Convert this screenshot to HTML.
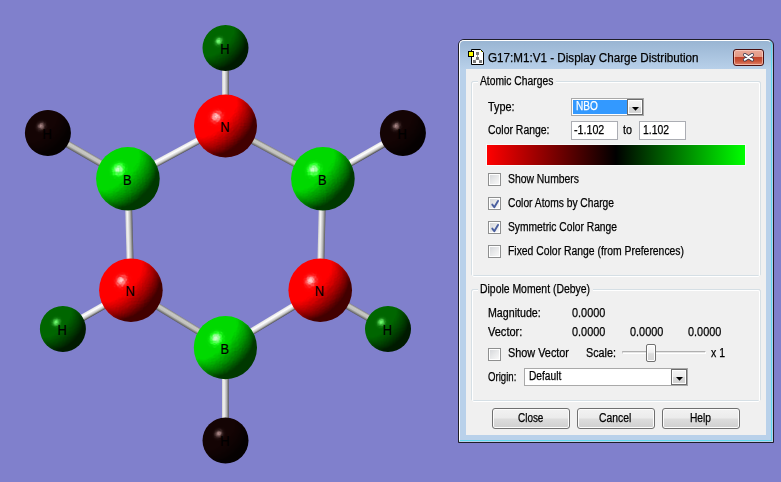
<!DOCTYPE html>
<html><head><meta charset="utf-8"><style>
html,body{margin:0;padding:0;width:781px;height:482px;overflow:hidden;background:#8080cc;}
body{position:relative;font-family:"Liberation Sans",sans-serif;}
.t{position:absolute;white-space:nowrap;transform-origin:0 0;-webkit-text-stroke:0.25px currentColor;}
.a{position:absolute;box-sizing:border-box;}
.cb{position:absolute;width:13px;height:13px;box-sizing:border-box;border:1px solid #8e8f8f;background:#fff;}
.cbi{position:absolute;left:1px;top:1px;width:9px;height:9px;background:linear-gradient(135deg,#d6d8db 0%,#e8e9ea 50%,#f8f8f8 100%);border:0;}
.btn{position:absolute;border:1px solid #707070;border-radius:3px;background:linear-gradient(#f2f2f2 0%,#ebebeb 48%,#dddddd 52%,#cfcfcf 100%);box-shadow:inset 0 0 0 1px #fcfcfc;}
</style></head><body>
<svg width="781" height="482" style="position:absolute;left:0;top:0"><defs>
<radialGradient id="hgr" cx="0.5" cy="0.5" r="0.5"><stop offset="0.0000" stop-color="rgb(255,255,255)"/><stop offset="0.0312" stop-color="rgb(255,255,255)"/><stop offset="0.0625" stop-color="rgb(255,255,255)"/><stop offset="0.0938" stop-color="rgb(254,254,254)"/><stop offset="0.1250" stop-color="rgb(253,253,253)"/><stop offset="0.1562" stop-color="rgb(252,252,252)"/><stop offset="0.1875" stop-color="rgb(250,250,250)"/><stop offset="0.2188" stop-color="rgb(249,249,249)"/><stop offset="0.2500" stop-color="rgb(247,247,247)"/><stop offset="0.2812" stop-color="rgb(245,245,245)"/><stop offset="0.3125" stop-color="rgb(242,242,242)"/><stop offset="0.3438" stop-color="rgb(239,239,239)"/><stop offset="0.3750" stop-color="rgb(236,236,236)"/><stop offset="0.4062" stop-color="rgb(233,233,233)"/><stop offset="0.4375" stop-color="rgb(229,229,229)"/><stop offset="0.4688" stop-color="rgb(225,225,225)"/><stop offset="0.5000" stop-color="rgb(221,221,221)"/><stop offset="0.5312" stop-color="rgb(216,216,216)"/><stop offset="0.5625" stop-color="rgb(211,211,211)"/><stop offset="0.5938" stop-color="rgb(205,205,205)"/><stop offset="0.6250" stop-color="rgb(199,199,199)"/><stop offset="0.6562" stop-color="rgb(192,192,192)"/><stop offset="0.6875" stop-color="rgb(185,185,185)"/><stop offset="0.7188" stop-color="rgb(177,177,177)"/><stop offset="0.7500" stop-color="rgb(169,169,169)"/><stop offset="0.7812" stop-color="rgb(159,159,159)"/><stop offset="0.8125" stop-color="rgb(149,149,149)"/><stop offset="0.8438" stop-color="rgb(137,137,137)"/><stop offset="0.8750" stop-color="rgb(123,123,123)"/><stop offset="0.9062" stop-color="rgb(108,108,108)"/><stop offset="0.9375" stop-color="rgb(89,89,89)"/><stop offset="0.9688" stop-color="rgb(63,63,63)"/><stop offset="1.0000" stop-color="rgb(0,0,0)"/></radialGradient>
<filter id="fn" x="-10%" y="-10%" width="120%" height="120%" color-interpolation-filters="sRGB">
<feColorMatrix in="SourceGraphic" type="matrix" values="0 0 0 0 0  0 0 0 0 0  0 0 0 0 0  1 0 0 0 0" result="h0"/>
<feGaussianBlur in="h0" stdDeviation="1.5" result="h"/>
<feDiffuseLighting in="h" surfaceScale="15.85" diffuseConstant="0.9" lighting-color="#fff" result="d1"><feDistantLight azimuth="225" elevation="25"/></feDiffuseLighting>
<feDiffuseLighting in="h" surfaceScale="15.85" diffuseConstant="0.9" lighting-color="#fff" result="d2"><feDistantLight azimuth="45" elevation="-25"/></feDiffuseLighting>
<feComponentTransfer in="d2" result="d2i"><feFuncR type="linear" slope="-1" intercept="1"/><feFuncG type="linear" slope="-1" intercept="1"/><feFuncB type="linear" slope="-1" intercept="1"/></feComponentTransfer>
<feComposite in="d1" in2="d2i" operator="arithmetic" k1="0" k2="1" k3="1" k4="-0.4400" result="I"/>
<feComponentTransfer in="I" result="If"><feFuncR type="table" tableValues="0.2600 0.2600 0.2600 0.2600 0.2600 0.2600 0.2600 0.2600 0.2600 0.2600 0.2600 0.2750 0.3000 0.3250 0.3500 0.3750 0.4000 0.4250 0.4500 0.4750 0.5000 0.5250 0.5500 0.5750 0.6000 0.6250 0.6500 0.6750 0.7000 0.7250 0.7500 0.7750 0.8000 0.8250 0.8500 0.8750 0.9000 0.9250 0.9500 0.9750 1.0000"/><feFuncG type="table" tableValues="0.2600 0.2600 0.2600 0.2600 0.2600 0.2600 0.2600 0.2600 0.2600 0.2600 0.2600 0.2750 0.3000 0.3250 0.3500 0.3750 0.4000 0.4250 0.4500 0.4750 0.5000 0.5250 0.5500 0.5750 0.6000 0.6250 0.6500 0.6750 0.7000 0.7250 0.7500 0.7750 0.8000 0.8250 0.8500 0.8750 0.9000 0.9250 0.9500 0.9750 1.0000"/><feFuncB type="table" tableValues="0.2600 0.2600 0.2600 0.2600 0.2600 0.2600 0.2600 0.2600 0.2600 0.2600 0.2600 0.2750 0.3000 0.3250 0.3500 0.3750 0.4000 0.4250 0.4500 0.4750 0.5000 0.5250 0.5500 0.5750 0.6000 0.6250 0.6500 0.6750 0.7000 0.7250 0.7500 0.7750 0.8000 0.8250 0.8500 0.8750 0.9000 0.9250 0.9500 0.9750 1.0000"/></feComponentTransfer>
<feColorMatrix in="If" type="matrix" values="1 0 0 0 0  0 0 0 0 0  0 0 0 0 0  0 0 0 0 1" result="c"/>
<feSpecularLighting in="h" surfaceScale="15.85" specularConstant="0.95" specularExponent="90" lighting-color="rgb(255,216,216)" result="s"><feDistantLight azimuth="225" elevation="39"/></feSpecularLighting>
<feComposite in="s" in2="c" operator="arithmetic" k1="0" k2="1" k3="1" k4="0" result="t"/>
<feComposite in="t" in2="SourceAlpha" operator="in"/>
</filter>
<filter id="fb" x="-10%" y="-10%" width="120%" height="120%" color-interpolation-filters="sRGB">
<feColorMatrix in="SourceGraphic" type="matrix" values="0 0 0 0 0  0 0 0 0 0  0 0 0 0 0  1 0 0 0 0" result="h0"/>
<feGaussianBlur in="h0" stdDeviation="1.5" result="h"/>
<feDiffuseLighting in="h" surfaceScale="15.85" diffuseConstant="0.9" lighting-color="#fff" result="d1"><feDistantLight azimuth="225" elevation="25"/></feDiffuseLighting>
<feDiffuseLighting in="h" surfaceScale="15.85" diffuseConstant="0.9" lighting-color="#fff" result="d2"><feDistantLight azimuth="45" elevation="-25"/></feDiffuseLighting>
<feComponentTransfer in="d2" result="d2i"><feFuncR type="linear" slope="-1" intercept="1"/><feFuncG type="linear" slope="-1" intercept="1"/><feFuncB type="linear" slope="-1" intercept="1"/></feComponentTransfer>
<feComposite in="d1" in2="d2i" operator="arithmetic" k1="0" k2="1" k3="1" k4="-0.4400" result="I"/>
<feComponentTransfer in="I" result="If"><feFuncR type="table" tableValues="0.2600 0.2600 0.2600 0.2600 0.2600 0.2600 0.2600 0.2600 0.2600 0.2600 0.2600 0.2750 0.3000 0.3250 0.3500 0.3750 0.4000 0.4250 0.4500 0.4750 0.5000 0.5250 0.5500 0.5750 0.6000 0.6250 0.6500 0.6750 0.7000 0.7250 0.7500 0.7750 0.8000 0.8250 0.8500 0.8750 0.9000 0.9250 0.9500 0.9750 1.0000"/><feFuncG type="table" tableValues="0.2600 0.2600 0.2600 0.2600 0.2600 0.2600 0.2600 0.2600 0.2600 0.2600 0.2600 0.2750 0.3000 0.3250 0.3500 0.3750 0.4000 0.4250 0.4500 0.4750 0.5000 0.5250 0.5500 0.5750 0.6000 0.6250 0.6500 0.6750 0.7000 0.7250 0.7500 0.7750 0.8000 0.8250 0.8500 0.8750 0.9000 0.9250 0.9500 0.9750 1.0000"/><feFuncB type="table" tableValues="0.2600 0.2600 0.2600 0.2600 0.2600 0.2600 0.2600 0.2600 0.2600 0.2600 0.2600 0.2750 0.3000 0.3250 0.3500 0.3750 0.4000 0.4250 0.4500 0.4750 0.5000 0.5250 0.5500 0.5750 0.6000 0.6250 0.6500 0.6750 0.7000 0.7250 0.7500 0.7750 0.8000 0.8250 0.8500 0.8750 0.9000 0.9250 0.9500 0.9750 1.0000"/></feComponentTransfer>
<feColorMatrix in="If" type="matrix" values="0 0 0 0 0  0 0.85 0 0 0  0 0 0 0 0  0 0 0 0 1" result="c"/>
<feSpecularLighting in="h" surfaceScale="15.85" specularConstant="0.95" specularExponent="90" lighting-color="rgb(216,255,216)" result="s"><feDistantLight azimuth="225" elevation="39"/></feSpecularLighting>
<feComposite in="s" in2="c" operator="arithmetic" k1="0" k2="1" k3="1" k4="0" result="t"/>
<feComposite in="t" in2="SourceAlpha" operator="in"/>
</filter>
<filter id="fhg" x="-10%" y="-10%" width="120%" height="120%" color-interpolation-filters="sRGB">
<feColorMatrix in="SourceGraphic" type="matrix" values="0 0 0 0 0  0 0 0 0 0  0 0 0 0 0  1 0 0 0 0" result="h0"/>
<feGaussianBlur in="h0" stdDeviation="1.5" result="h"/>
<feDiffuseLighting in="h" surfaceScale="11.50" diffuseConstant="0.9" lighting-color="#fff" result="d1"><feDistantLight azimuth="225" elevation="25"/></feDiffuseLighting>
<feDiffuseLighting in="h" surfaceScale="11.50" diffuseConstant="0.9" lighting-color="#fff" result="d2"><feDistantLight azimuth="45" elevation="-25"/></feDiffuseLighting>
<feComponentTransfer in="d2" result="d2i"><feFuncR type="linear" slope="-1" intercept="1"/><feFuncG type="linear" slope="-1" intercept="1"/><feFuncB type="linear" slope="-1" intercept="1"/></feComponentTransfer>
<feComposite in="d1" in2="d2i" operator="arithmetic" k1="0" k2="1" k3="1" k4="-0.4400" result="I"/>
<feComponentTransfer in="I" result="If"><feFuncR type="table" tableValues="0.2600 0.2600 0.2600 0.2600 0.2600 0.2600 0.2600 0.2600 0.2600 0.2600 0.2600 0.2750 0.3000 0.3250 0.3500 0.3750 0.4000 0.4250 0.4500 0.4750 0.5000 0.5250 0.5500 0.5750 0.6000 0.6250 0.6500 0.6750 0.7000 0.7250 0.7500 0.7750 0.8000 0.8250 0.8500 0.8750 0.9000 0.9250 0.9500 0.9750 1.0000"/><feFuncG type="table" tableValues="0.2600 0.2600 0.2600 0.2600 0.2600 0.2600 0.2600 0.2600 0.2600 0.2600 0.2600 0.2750 0.3000 0.3250 0.3500 0.3750 0.4000 0.4250 0.4500 0.4750 0.5000 0.5250 0.5500 0.5750 0.6000 0.6250 0.6500 0.6750 0.7000 0.7250 0.7500 0.7750 0.8000 0.8250 0.8500 0.8750 0.9000 0.9250 0.9500 0.9750 1.0000"/><feFuncB type="table" tableValues="0.2600 0.2600 0.2600 0.2600 0.2600 0.2600 0.2600 0.2600 0.2600 0.2600 0.2600 0.2750 0.3000 0.3250 0.3500 0.3750 0.4000 0.4250 0.4500 0.4750 0.5000 0.5250 0.5500 0.5750 0.6000 0.6250 0.6500 0.6750 0.7000 0.7250 0.7500 0.7750 0.8000 0.8250 0.8500 0.8750 0.9000 0.9250 0.9500 0.9750 1.0000"/></feComponentTransfer>
<feColorMatrix in="If" type="matrix" values="0 0 0 0 0  0 0.4 0 0 0  0 0 0 0 0  0 0 0 0 1" result="c"/>
<feSpecularLighting in="h" surfaceScale="11.50" specularConstant="0.6" specularExponent="90" lighting-color="rgb(191,255,191)" result="s"><feDistantLight azimuth="225" elevation="39"/></feSpecularLighting>
<feComposite in="s" in2="c" operator="arithmetic" k1="0" k2="1" k3="1" k4="0" result="t"/>
<feComposite in="t" in2="SourceAlpha" operator="in"/>
</filter>
<filter id="fhk" x="-10%" y="-10%" width="120%" height="120%" color-interpolation-filters="sRGB">
<feColorMatrix in="SourceGraphic" type="matrix" values="0 0 0 0 0  0 0 0 0 0  0 0 0 0 0  1 0 0 0 0" result="h0"/>
<feGaussianBlur in="h0" stdDeviation="1.5" result="h"/>
<feDiffuseLighting in="h" surfaceScale="11.50" diffuseConstant="0.9" lighting-color="#fff" result="d1"><feDistantLight azimuth="225" elevation="25"/></feDiffuseLighting>
<feDiffuseLighting in="h" surfaceScale="11.50" diffuseConstant="0.9" lighting-color="#fff" result="d2"><feDistantLight azimuth="45" elevation="-25"/></feDiffuseLighting>
<feComponentTransfer in="d2" result="d2i"><feFuncR type="linear" slope="-1" intercept="1"/><feFuncG type="linear" slope="-1" intercept="1"/><feFuncB type="linear" slope="-1" intercept="1"/></feComponentTransfer>
<feComposite in="d1" in2="d2i" operator="arithmetic" k1="0" k2="1" k3="1" k4="-0.4400" result="I"/>
<feComponentTransfer in="I" result="If"><feFuncR type="table" tableValues="0.2600 0.2600 0.2600 0.2600 0.2600 0.2600 0.2600 0.2600 0.2600 0.2600 0.2600 0.2750 0.3000 0.3250 0.3500 0.3750 0.4000 0.4250 0.4500 0.4750 0.5000 0.5250 0.5500 0.5750 0.6000 0.6250 0.6500 0.6750 0.7000 0.7250 0.7500 0.7750 0.8000 0.8250 0.8500 0.8750 0.9000 0.9250 0.9500 0.9750 1.0000"/><feFuncG type="table" tableValues="0.2600 0.2600 0.2600 0.2600 0.2600 0.2600 0.2600 0.2600 0.2600 0.2600 0.2600 0.2750 0.3000 0.3250 0.3500 0.3750 0.4000 0.4250 0.4500 0.4750 0.5000 0.5250 0.5500 0.5750 0.6000 0.6250 0.6500 0.6750 0.7000 0.7250 0.7500 0.7750 0.8000 0.8250 0.8500 0.8750 0.9000 0.9250 0.9500 0.9750 1.0000"/><feFuncB type="table" tableValues="0.2600 0.2600 0.2600 0.2600 0.2600 0.2600 0.2600 0.2600 0.2600 0.2600 0.2600 0.2750 0.3000 0.3250 0.3500 0.3750 0.4000 0.4250 0.4500 0.4750 0.5000 0.5250 0.5500 0.5750 0.6000 0.6250 0.6500 0.6750 0.7000 0.7250 0.7500 0.7750 0.8000 0.8250 0.8500 0.8750 0.9000 0.9250 0.9500 0.9750 1.0000"/></feComponentTransfer>
<feColorMatrix in="If" type="matrix" values="0.08 0 0 0 0  0 0.015 0 0 0  0 0 0.015 0 0  0 0 0 0 1" result="c"/>
<feSpecularLighting in="h" surfaceScale="11.50" specularConstant="0.6" specularExponent="90" lighting-color="rgb(255,224,224)" result="s"><feDistantLight azimuth="225" elevation="39"/></feSpecularLighting>
<feComposite in="s" in2="c" operator="arithmetic" k1="0" k2="1" k3="1" k4="0" result="t"/>
<feComposite in="t" in2="SourceAlpha" operator="in"/>
</filter>
</defs>
<linearGradient id="bd0" gradientUnits="userSpaceOnUse" x1="222.05" y1="48.00" x2="228.95" y2="48.00"><stop offset="0" stop-color="#d0d0d0"/><stop offset="0.3" stop-color="#f4f4f4"/><stop offset="0.65" stop-color="#b8b8b8"/><stop offset="1" stop-color="#5a5a5a"/></linearGradient>
<line x1="225.5" y1="48" x2="225.5" y2="126" stroke="url(#bd0)" stroke-width="6.9"/>
<linearGradient id="bd1" gradientUnits="userSpaceOnUse" x1="223.86" y1="122.97" x2="227.14" y2="129.03"><stop offset="0" stop-color="#e4e4e4"/><stop offset="0.35" stop-color="#ffffff"/><stop offset="0.7" stop-color="#c4c4c4"/><stop offset="1" stop-color="#4a4a4a"/></linearGradient>
<line x1="225.5" y1="126" x2="127.9" y2="178.8" stroke="url(#bd1)" stroke-width="6.9"/>
<linearGradient id="bd2" gradientUnits="userSpaceOnUse" x1="227.14" y1="122.97" x2="223.86" y2="129.03"><stop offset="0" stop-color="#808080"/><stop offset="0.25" stop-color="#c8c8c4"/><stop offset="0.6" stop-color="#c0c0bc"/><stop offset="1" stop-color="#5a5a5a"/></linearGradient>
<line x1="225.5" y1="126" x2="322.9" y2="178.8" stroke="url(#bd2)" stroke-width="6.9"/>
<linearGradient id="bd3" gradientUnits="userSpaceOnUse" x1="129.62" y1="175.81" x2="126.18" y2="181.79"><stop offset="0" stop-color="#808080"/><stop offset="0.25" stop-color="#c8c8c4"/><stop offset="0.6" stop-color="#c0c0bc"/><stop offset="1" stop-color="#5a5a5a"/></linearGradient>
<line x1="127.9" y1="178.8" x2="47.9" y2="132.9" stroke="url(#bd3)" stroke-width="6.9"/>
<linearGradient id="bd4" gradientUnits="userSpaceOnUse" x1="321.18" y1="175.81" x2="324.62" y2="181.79"><stop offset="0" stop-color="#e4e4e4"/><stop offset="0.35" stop-color="#ffffff"/><stop offset="0.7" stop-color="#c4c4c4"/><stop offset="1" stop-color="#4a4a4a"/></linearGradient>
<line x1="322.9" y1="178.8" x2="402.9" y2="132.9" stroke="url(#bd4)" stroke-width="6.9"/>
<linearGradient id="bd5" gradientUnits="userSpaceOnUse" x1="124.45" y1="178.89" x2="131.35" y2="178.71"><stop offset="0" stop-color="#d0d0d0"/><stop offset="0.3" stop-color="#f4f4f4"/><stop offset="0.65" stop-color="#b8b8b8"/><stop offset="1" stop-color="#5a5a5a"/></linearGradient>
<line x1="127.9" y1="178.8" x2="130.9" y2="290.2" stroke="url(#bd5)" stroke-width="6.9"/>
<linearGradient id="bd6" gradientUnits="userSpaceOnUse" x1="319.45" y1="178.72" x2="326.35" y2="178.88"><stop offset="0" stop-color="#d0d0d0"/><stop offset="0.3" stop-color="#f4f4f4"/><stop offset="0.65" stop-color="#b8b8b8"/><stop offset="1" stop-color="#5a5a5a"/></linearGradient>
<line x1="322.9" y1="178.8" x2="320.2" y2="290.2" stroke="url(#bd6)" stroke-width="6.9"/>
<linearGradient id="bd7" gradientUnits="userSpaceOnUse" x1="129.19" y1="287.20" x2="132.61" y2="293.20"><stop offset="0" stop-color="#e4e4e4"/><stop offset="0.35" stop-color="#ffffff"/><stop offset="0.7" stop-color="#c4c4c4"/><stop offset="1" stop-color="#4a4a4a"/></linearGradient>
<line x1="130.9" y1="290.2" x2="62.9" y2="329" stroke="url(#bd7)" stroke-width="6.9"/>
<linearGradient id="bd8" gradientUnits="userSpaceOnUse" x1="321.91" y1="287.21" x2="318.49" y2="293.19"><stop offset="0" stop-color="#808080"/><stop offset="0.25" stop-color="#c8c8c4"/><stop offset="0.6" stop-color="#c0c0bc"/><stop offset="1" stop-color="#5a5a5a"/></linearGradient>
<line x1="320.2" y1="290.2" x2="388" y2="329" stroke="url(#bd8)" stroke-width="6.9"/>
<linearGradient id="bd9" gradientUnits="userSpaceOnUse" x1="132.69" y1="287.25" x2="129.11" y2="293.15"><stop offset="0" stop-color="#808080"/><stop offset="0.25" stop-color="#c8c8c4"/><stop offset="0.6" stop-color="#c0c0bc"/><stop offset="1" stop-color="#5a5a5a"/></linearGradient>
<line x1="130.9" y1="290.2" x2="225.4" y2="347.6" stroke="url(#bd9)" stroke-width="6.9"/>
<linearGradient id="bd10" gradientUnits="userSpaceOnUse" x1="318.41" y1="287.25" x2="321.99" y2="293.15"><stop offset="0" stop-color="#e4e4e4"/><stop offset="0.35" stop-color="#ffffff"/><stop offset="0.7" stop-color="#c4c4c4"/><stop offset="1" stop-color="#4a4a4a"/></linearGradient>
<line x1="320.2" y1="290.2" x2="225.4" y2="347.6" stroke="url(#bd10)" stroke-width="6.9"/>
<linearGradient id="bd11" gradientUnits="userSpaceOnUse" x1="221.95" y1="347.60" x2="228.85" y2="347.60"><stop offset="0" stop-color="#d0d0d0"/><stop offset="0.3" stop-color="#f4f4f4"/><stop offset="0.65" stop-color="#b8b8b8"/><stop offset="1" stop-color="#5a5a5a"/></linearGradient>
<line x1="225.4" y1="347.6" x2="225.5" y2="440.5" stroke="url(#bd11)" stroke-width="6.9"/>
<circle cx="225.5" cy="48" r="22.30" fill="#005a00"/>
<circle cx="225.5" cy="48" r="23" fill="url(#hgr)" filter="url(#fhg)"/>
<circle cx="225.5" cy="126" r="30.80" fill="#e00000"/>
<circle cx="225.5" cy="126" r="31.5" fill="url(#hgr)" filter="url(#fn)"/>
<circle cx="127.9" cy="178.8" r="31.10" fill="#00b000"/>
<circle cx="127.9" cy="178.8" r="31.8" fill="url(#hgr)" filter="url(#fb)"/>
<circle cx="322.9" cy="178.8" r="31.10" fill="#00b000"/>
<circle cx="322.9" cy="178.8" r="31.8" fill="url(#hgr)" filter="url(#fb)"/>
<circle cx="47.9" cy="132.9" r="22.30" fill="#120404"/>
<circle cx="47.9" cy="132.9" r="23" fill="url(#hgr)" filter="url(#fhk)"/>
<circle cx="402.9" cy="132.9" r="22.30" fill="#120404"/>
<circle cx="402.9" cy="132.9" r="23" fill="url(#hgr)" filter="url(#fhk)"/>
<circle cx="130.9" cy="290.2" r="31.10" fill="#e00000"/>
<circle cx="130.9" cy="290.2" r="31.8" fill="url(#hgr)" filter="url(#fn)"/>
<circle cx="320.2" cy="290.2" r="31.10" fill="#e00000"/>
<circle cx="320.2" cy="290.2" r="31.8" fill="url(#hgr)" filter="url(#fn)"/>
<circle cx="62.9" cy="329" r="22.30" fill="#005a00"/>
<circle cx="62.9" cy="329" r="23" fill="url(#hgr)" filter="url(#fhg)"/>
<circle cx="388" cy="329" r="22.30" fill="#005a00"/>
<circle cx="388" cy="329" r="23" fill="url(#hgr)" filter="url(#fhg)"/>
<circle cx="225.4" cy="347.6" r="30.90" fill="#00b000"/>
<circle cx="225.4" cy="347.6" r="31.6" fill="url(#hgr)" filter="url(#fb)"/>
<circle cx="225.5" cy="440.5" r="22.30" fill="#120404"/>
<circle cx="225.5" cy="440.5" r="23" fill="url(#hgr)" filter="url(#fhk)"/>
<text transform="translate(224.80 53.90) scale(0.86 1)" x="0" y="0" font-family="Liberation Sans" font-size="15" text-anchor="middle" fill="#000" stroke="#000" stroke-width="0.2">H</text>
<text transform="translate(224.80 131.90) scale(0.86 1)" x="0" y="0" font-family="Liberation Sans" font-size="15" text-anchor="middle" fill="#000" stroke="#000" stroke-width="0.2">N</text>
<text transform="translate(127.20 184.70) scale(0.86 1)" x="0" y="0" font-family="Liberation Sans" font-size="15" text-anchor="middle" fill="#000" stroke="#000" stroke-width="0.2">B</text>
<text transform="translate(322.20 184.70) scale(0.86 1)" x="0" y="0" font-family="Liberation Sans" font-size="15" text-anchor="middle" fill="#000" stroke="#000" stroke-width="0.2">B</text>
<text transform="translate(47.20 138.80) scale(0.86 1)" x="0" y="0" font-family="Liberation Sans" font-size="15" text-anchor="middle" fill="#000" stroke="#000" stroke-width="0.2">H</text>
<text transform="translate(402.20 138.80) scale(0.86 1)" x="0" y="0" font-family="Liberation Sans" font-size="15" text-anchor="middle" fill="#000" stroke="#000" stroke-width="0.2">H</text>
<text transform="translate(130.20 296.10) scale(0.86 1)" x="0" y="0" font-family="Liberation Sans" font-size="15" text-anchor="middle" fill="#000" stroke="#000" stroke-width="0.2">N</text>
<text transform="translate(319.50 296.10) scale(0.86 1)" x="0" y="0" font-family="Liberation Sans" font-size="15" text-anchor="middle" fill="#000" stroke="#000" stroke-width="0.2">N</text>
<text transform="translate(62.20 334.90) scale(0.86 1)" x="0" y="0" font-family="Liberation Sans" font-size="15" text-anchor="middle" fill="#000" stroke="#000" stroke-width="0.2">H</text>
<text transform="translate(387.30 334.90) scale(0.86 1)" x="0" y="0" font-family="Liberation Sans" font-size="15" text-anchor="middle" fill="#000" stroke="#000" stroke-width="0.2">H</text>
<text transform="translate(224.70 353.50) scale(0.86 1)" x="0" y="0" font-family="Liberation Sans" font-size="15" text-anchor="middle" fill="#000" stroke="#000" stroke-width="0.2">B</text>
<text transform="translate(224.80 446.40) scale(0.86 1)" x="0" y="0" font-family="Liberation Sans" font-size="15" text-anchor="middle" fill="#000" stroke="#000" stroke-width="0.2">H</text>
</svg>
<!-- window -->
<div class="a" style="left:458px;top:39px;width:316px;height:404px;border:1px solid #1e1e28;border-radius:6px 6px 0 0;background:linear-gradient(#98b4d2 0px,#b9d1ea 30px,#b9d1ea 100%);"></div>
<div class="a" style="left:459px;top:40px;width:313px;height:401px;border-left:1px solid #fff;border-top:1px solid #fff;border-right:1px solid #5fd8ee;border-bottom:1px solid #5fd8ee;border-radius:5px 5px 0 0;"></div>
<div class="a" style="left:466px;top:69px;width:300px;height:366px;background:#f0f0f0;"></div>
<!-- title icon -->
<svg width="22" height="22" style="position:absolute;left:466px;top:46px">
<path d="M5.5 3.5 H14.5 L17.5 6.5 V18.5 H5.5 Z" fill="#fff" stroke="#000" stroke-width="1"/>
<rect x="2.5" y="5.5" width="5" height="5" fill="#ffff00" stroke="#000" stroke-width="1"/>
<rect x="15" y="5" width="1" height="1" fill="#e8e800"/>
<g fill="#7a7a7a"><rect x="10" y="6" width="3" height="3"/><rect x="10" y="11" width="3" height="3"/><rect x="7" y="14" width="3" height="3"/><rect x="13" y="14" width="3" height="3"/></g>
<path d="M11.5 9 V11 M10.5 13.5 L9 14.5 M12.5 13.5 L14 14.5" stroke="#a0a0a0" stroke-width="1"/>
</svg>
<!-- close button -->
<div class="a" style="left:733px;top:49px;width:31px;height:17px;border:1px solid #4a1010;border-radius:3px;background:linear-gradient(#eaa898 0%,#e39985 45%,#c2432a 50%,#c9553a 75%,#e2846c 100%);box-shadow:inset 0 0 0 1px rgba(255,220,210,0.6);"></div>
<svg width="16" height="14" style="position:absolute;left:740px;top:50px"><path d="M4.8 4.8 L12.2 9.7 M12.2 4.8 L4.8 9.7" stroke="#3a3a50" stroke-width="3.6" stroke-linecap="round"/><path d="M4.8 4.8 L12.2 9.7 M12.2 4.8 L4.8 9.7" stroke="#fff" stroke-width="2.0" stroke-linecap="round"/></svg>
<!-- group boxes -->
<div class="a" style="left:471px;top:81px;width:290px;height:195px;border:1px solid #d5dfe5;border-radius:2px;"></div>
<div class="a" style="left:472px;top:82px;width:288px;height:195px;border:1px solid #fff;border-radius:2px;"></div>
<div class="a" style="left:478px;top:74px;width:78px;height:12px;background:#f0f0f0;"></div>
<div class="a" style="left:471px;top:289px;width:290px;height:112px;border:1px solid #d5dfe5;border-radius:2px;"></div>
<div class="a" style="left:472px;top:290px;width:288px;height:112px;border:1px solid #fff;border-radius:2px;"></div>
<div class="a" style="left:478px;top:282px;width:115px;height:12px;background:#f0f0f0;"></div>
<!-- type combo -->
<div class="a" style="left:571px;top:98px;width:73px;height:18px;border:1px solid #a9a9a9;background:#fff;"></div>
<div class="a" style="left:573px;top:100px;width:54px;height:14px;background:#3399ff;"></div>
<div class="a" style="left:627px;top:99px;width:16px;height:16px;border:1px solid #6d6d6d;background:#fff;"></div>
<div class="a" style="left:629px;top:101px;width:12px;height:12px;background:linear-gradient(#f3f3f3 0%,#ececec 50%,#d8d8d8 50%,#d3d3d3 100%);"></div>
<svg width="10" height="6" style="position:absolute;left:631px;top:106px"><path d="M1 1 H8 L4.5 4.8 Z" fill="#000"/></svg>
<!-- edits -->
<div class="a" style="left:571px;top:121px;width:47px;height:19px;border:1px solid #abadb3;border-top-color:#abadb3;background:#fff;"></div>
<div class="a" style="left:639px;top:121px;width:47px;height:19px;border:1px solid #abadb3;background:#fff;"></div>
<!-- color bar -->
<div class="a" style="left:486px;top:144px;width:260px;height:22px;background:#f8fafa;"></div>
<div class="a" style="left:487px;top:145px;width:258px;height:20px;background:linear-gradient(90deg,#ff0000 0%,#000 50%,#00ff00 100%);"></div>
<div class="cb" style="left:488px;top:173px"><div class="cbi"></div></div>
<div class="cb" style="left:488px;top:197px"><div class="cbi"></div><svg width="13" height="13" style="position:absolute;left:0;top:0"><path d="M3.3 6.6 L5.3 9.3 L9.0 2.9" stroke="#4a5f9f" stroke-width="1.9" fill="none" stroke-linecap="round" stroke-linejoin="round"/></svg></div>
<div class="cb" style="left:488px;top:221px"><div class="cbi"></div><svg width="13" height="13" style="position:absolute;left:0;top:0"><path d="M3.3 6.6 L5.3 9.3 L9.0 2.9" stroke="#4a5f9f" stroke-width="1.9" fill="none" stroke-linecap="round" stroke-linejoin="round"/></svg></div>
<div class="cb" style="left:488px;top:245px"><div class="cbi"></div></div>
<div class="cb" style="left:488px;top:348px"><div class="cbi"></div></div>

<!-- slider -->
<div class="a" style="left:622px;top:351px;width:84px;height:3px;border-top:1px solid #b0b0b0;border-left:1px solid #c8c8c8;border-bottom:1px solid #fff;border-right:1px solid #fff;background:#e6e6e6;"></div>
<div class="a" style="left:646px;top:344px;width:10px;height:18px;border:1px solid #707070;border-radius:2px;background:linear-gradient(#fafafa 0%,#f0f0f0 45%,#dcdcdc 55%,#d6d6d6 100%);box-shadow:inset 0 0 0 1px #fff;"></div>
<!-- origin combo -->
<div class="a" style="left:524px;top:368px;width:164px;height:18px;border:1px solid #a9a9a9;background:#fff;"></div>
<div class="a" style="left:671px;top:369px;width:16px;height:16px;border:1px solid #6d6d6d;background:#fff;"></div>
<div class="a" style="left:673px;top:371px;width:12px;height:12px;background:linear-gradient(#f3f3f3 0%,#ececec 50%,#d8d8d8 50%,#d3d3d3 100%);"></div>
<svg width="10" height="6" style="position:absolute;left:675px;top:376px"><path d="M1 1 H8 L4.5 4.8 Z" fill="#000"/></svg>
<!-- buttons -->
<div class="btn" style="left:492px;top:408px;width:76px;height:19px"></div>
<div class="btn" style="left:577px;top:408px;width:76px;height:19px"></div>
<div class="btn" style="left:662px;top:408px;width:76px;height:19px"></div>

<div class="t" style="left:488.00px;top:52.22px;font-size:12.5px;line-height:12.5px;color:#000;transform:scaleX(0.9323);">G17:M1:V1 - Display Charge Distribution</div>
<div class="t" style="left:480.00px;top:75.04px;font-size:12px;line-height:12px;color:#000;transform:scaleX(0.8585);">Atomic Charges</div>
<div class="t" style="left:488.00px;top:101.04px;font-size:12px;line-height:12px;color:#000;transform:scaleX(0.9032);">Type:</div>
<div class="t" style="left:576.40px;top:99.84px;font-size:12px;line-height:12px;color:#fff;transform:scaleX(0.8381);">NBO</div>
<div class="t" style="left:487.80px;top:124.34px;font-size:12px;line-height:12px;color:#000;transform:scaleX(0.8697);">Color Range:</div>
<div class="t" style="left:573.70px;top:124.44px;font-size:12px;line-height:12px;color:#000;transform:scaleX(0.8907);">-1.102</div>
<div class="t" style="left:623.00px;top:124.44px;font-size:12px;line-height:12px;color:#000;transform:scaleX(0.8982);">to</div>
<div class="t" style="left:643.00px;top:124.44px;font-size:12px;line-height:12px;color:#000;transform:scaleX(0.8658);">1.102</div>
<div class="t" style="left:508.30px;top:172.64px;font-size:12px;line-height:12px;color:#000;transform:scaleX(0.8656);">Show Numbers</div>
<div class="t" style="left:508.00px;top:196.64px;font-size:12px;line-height:12px;color:#000;transform:scaleX(0.8545);">Color Atoms by Charge</div>
<div class="t" style="left:507.60px;top:220.64px;font-size:12px;line-height:12px;color:#000;transform:scaleX(0.8557);">Symmetric Color Range</div>
<div class="t" style="left:508.00px;top:244.64px;font-size:12px;line-height:12px;color:#000;transform:scaleX(0.8653);">Fixed Color Range (from Preferences)</div>
<div class="t" style="left:480.40px;top:282.64px;font-size:12px;line-height:12px;color:#000;transform:scaleX(0.8681);">Dipole Moment (Debye)</div>
<div class="t" style="left:488.30px;top:307.14px;font-size:12px;line-height:12px;color:#000;transform:scaleX(0.8877);">Magnitude:</div>
<div class="t" style="left:571.50px;top:307.14px;font-size:12px;line-height:12px;color:#000;transform:scaleX(0.9076);">0.0000</div>
<div class="t" style="left:488.00px;top:326.44px;font-size:12px;line-height:12px;color:#000;transform:scaleX(0.9183);">Vector:</div>
<div class="t" style="left:571.50px;top:326.44px;font-size:12px;line-height:12px;color:#000;transform:scaleX(0.9076);">0.0000</div>
<div class="t" style="left:630.00px;top:326.44px;font-size:12px;line-height:12px;color:#000;transform:scaleX(0.9076);">0.0000</div>
<div class="t" style="left:688.00px;top:326.44px;font-size:12px;line-height:12px;color:#000;transform:scaleX(0.9076);">0.0000</div>
<div class="t" style="left:508.30px;top:346.84px;font-size:12px;line-height:12px;color:#000;transform:scaleX(0.9053);">Show Vector</div>
<div class="t" style="left:586.00px;top:346.84px;font-size:12px;line-height:12px;color:#000;transform:scaleX(0.8993);">Scale:</div>
<div class="t" style="left:711.00px;top:346.84px;font-size:12px;line-height:12px;color:#000;transform:scaleX(0.8739);">x 1</div>
<div class="t" style="left:487.70px;top:370.54px;font-size:12px;line-height:12px;color:#000;transform:scaleX(0.8008);">Origin:</div>
<div class="t" style="left:529.30px;top:370.34px;font-size:12px;line-height:12px;color:#000;transform:scaleX(0.8498);">Default</div>
<div class="t" style="left:517.60px;top:411.74px;font-size:12px;line-height:12px;color:#000;transform:scaleX(0.8276);">Close</div>
<div class="t" style="left:598.80px;top:411.74px;font-size:12px;line-height:12px;color:#000;transform:scaleX(0.8621);">Cancel</div>
<div class="t" style="left:690.00px;top:411.74px;font-size:12px;line-height:12px;color:#000;transform:scaleX(0.8505);">Help</div>

</body></html>
